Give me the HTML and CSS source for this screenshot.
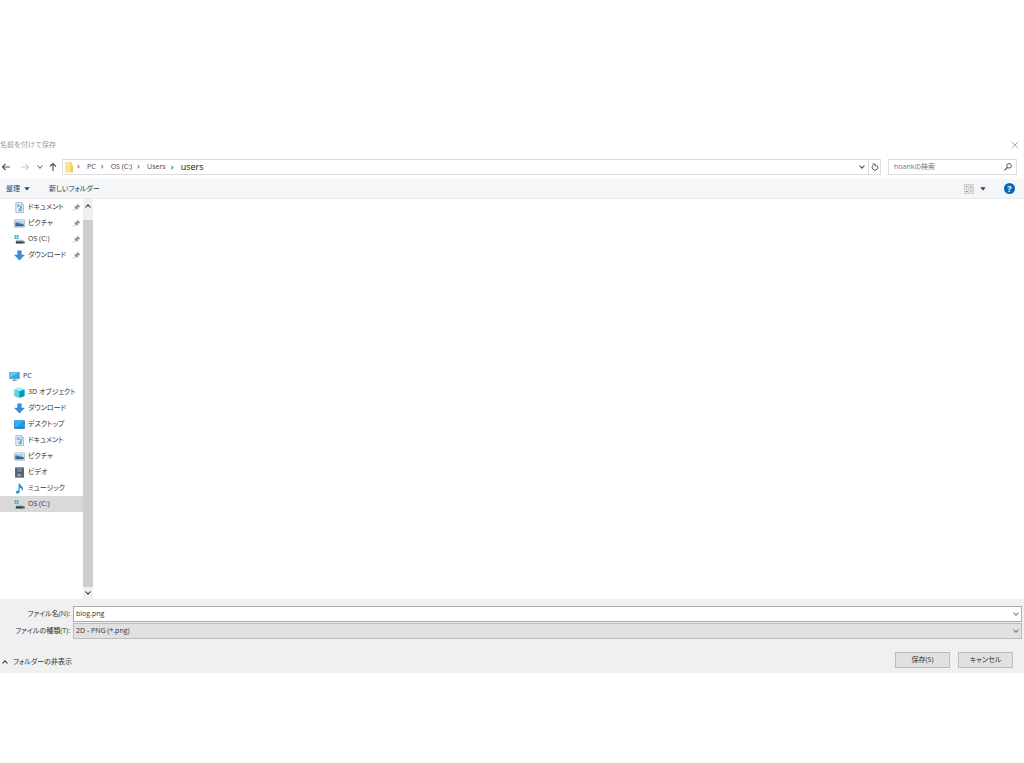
FILE: index.html
```
<!DOCTYPE html>
<html lang="ja">
<head>
    <meta charset="UTF-8">
    <title>名前を付けて保存</title>
    <link rel="stylesheet" href="styles.css">
</head>
<body>
    <!-- shared icons -->
    <svg class="sprite" aria-hidden="true">
        <symbol id="chevron" viewBox="0 0 8 8"><path d="M1.5 2.5 4 5.2 6.5 2.5" fill="none" stroke="currentColor" stroke-width="1.1"/></symbol>
        <symbol id="pin" viewBox="0 0 8 8"><path d="M4.3.7 7.3 3.5 6.6 4 6 3.9 4.8 5.2 4.7 6.5 4.1 6.8 1.2 4 1.6 3.4 2.9 3.3 4.1 2.1 3.9 1.3z" fill="#8d98a1"/><path d="M2.8 5.2.7 7.3" stroke="#8d98a1" stroke-width=".9"/></symbol>
        <symbol id="doc" viewBox="0 0 12 12"><path d="M2 .5h6l2.300 2.300v8.700H2z" fill="#e6f0f6" stroke="#9ba5ad" stroke-width=".8"/><path d="M3.500 2.500h2.500v3H3.500zM6.400 4h2.400v3H6.400zM5 7h3.500v3H5z" fill="#6cb4e0"/><path d="M8 .5v2.300h2.300" fill="none" stroke="#8c969e" stroke-width=".6"/></symbol>
        <symbol id="picture" viewBox="0 0 12 12"><path d="M.5 2h11v8H.5z" fill="#f4f7f9" stroke="#a0abb4" stroke-width=".8"/><path d="M1.500 3h9v6h-9z" fill="#a9d3ef"/><path d="M1.500 5c3-.5 5 1.500 9 1.500V8h-9z" fill="#3f75a3"/><path d="M1.500 7.500h9V9h-9z" fill="#2c5f8c"/></symbol>
        <symbol id="drive" viewBox="0 0 12 12"><path d="M.5 1h2v2h-2zM3 1h2v2H3zM.5 3.500h2v2h-2zM3 3.500h2v2H3z" fill="#29b6e8"/><path d="M2.500 6.300h7l1.500 1.700H2z" fill="#b8bdc0"/><path d="M2 8h9.500v2.400H2z" fill="#333a3d"/><path d="M9.500 8.700h1v.8h-1z" fill="#7ee089"/></symbol>
        <symbol id="down" viewBox="0 0 12 12"><path d="M4 .8h4v4.700h3.300L6 11.200.7 5.500H4z" fill="#368fe0" stroke="#2878c4" stroke-width=".5"/></symbol>
        <symbol id="pc" viewBox="0 0 12 12"><path d="M.5 1.500h11v7H.5z" fill="#34a8ed" stroke="#6e9dbe" stroke-width=".7"/><path d="M1 2h9L1 7z" fill="#68c5f7"/><path d="M5 8.800h2V10h2v.8H3V10h2z" fill="#7e97a7"/></symbol>
        <symbol id="cube" viewBox="0 0 12 12"><path d="M.6 2.600 6 .6l5.400 2v7.100L6 11.700.6 9.700z" fill="#19b3cf"/><path d="M.6 2.600 6 .6l5.400 2-5.400 2z" fill="#a9edf4"/><path d="M.6 2.600 6 4.600v7.100L.6 9.700z" fill="#5bd5e4"/><path d="M6 4.600 11.400 2.600v7.100l-5.400 2z" fill="#079bb9"/></symbol>
        <symbol id="desktop" viewBox="0 0 12 12"><path d="M.5 1.800h11v8.400H.5z" fill="#159cf2" stroke="#1a78bd" stroke-width=".7"/><path d="M1 2.300h8L3 9.500H1z" fill="#2eb0fc"/><path d="M.8 9.200h10.400v1H.8z" fill="#116fae"/></symbol>
        <symbol id="video" viewBox="0 0 12 12"><path d="M1.200.5h9.600v11H1.200z" fill="#42484e"/><path d="M3.300 1.300h5.400v4.300H3.300z" fill="#6485bb"/><path d="M3.300 6.200h5.400v4.500H3.300z" fill="#4773a8"/><path d="m3.300 9 2-2 3.400 3H3.300z" fill="#c69c60"/><path d="M2.300 1v10M9.700 1v10" stroke="#c5cacd" stroke-width=".7" stroke-dasharray="1 1"/></symbol>
        <symbol id="music" viewBox="0 0 12 12"><path d="M5 .5h1.200c.2 2 4 3 3.700 6-.1 1-.6 1.700-1.400 2.200.6-2.200-.5-3-2.300-3.500v4C6.200 11 4.800 11.700 3.500 11.500 2 11.300 1.600 10 2.600 9c.6-.6 1.500-.9 2.400-.6z" fill="#1597e5"/></symbol>
    </svg>

    <form class="dialog">
        <header class="titlebar">
            <h1>名前を付けて保存</h1>
            <button type="button" class="close" aria-label="閉じる"><svg viewBox="0 0 8 8"><path d="m.8.8 6.400 6.400M7.200.8.8 7.200" stroke="#999" stroke-width=".8"/></svg></button>
        </header>

        <div class="navbar">
            <button type="button" class="nav" aria-label="戻る"><svg viewBox="0 0 10 10"><path d="M9 5H1.500M4.500 2l-3 3 3 3" fill="none" stroke="#555" stroke-width="1.100"/></svg></button>
            <button type="button" class="nav forward" aria-label="進む"><svg viewBox="0 0 10 10"><path d="M1 5h7.500M5.500 2l3 3-3 3" fill="none" stroke="#ccc" stroke-width="1.100"/></svg></button>
            <button type="button" class="recent" aria-label="最近の場所"><svg><use href="#chevron"/></svg></button>
            <button type="button" class="nav" aria-label="上へ"><svg viewBox="0 0 10 10"><path d="M5 9V1.500M2 4.500l3-3 3 3" fill="none" stroke="#555" stroke-width="1.200"/></svg></button>
            <div class="address">
                <svg class="folder" viewBox="0 0 10 12"><path d="M1 1h7v3l1 .7v6.500H1z" fill="#f6d672"/><path d="M1 1h5.500v10.200H1z" fill="#ffe18a"/><path d="M7 5h2v6.200H7z" fill="#eec95c"/></svg>
                <nav>
                    <a href="#">PC</a>
                    <a href="#">OS (C:)</a>
                    <a href="#">Users</a>
                    <a href="#" class="current">users</a>
                </nav>
                <button type="button" class="drop" aria-label="履歴"><svg><use href="#chevron"/></svg></button>
                <button type="button" class="refresh" aria-label="更新"><svg viewBox="0 0 10 10"><path d="M3.200 3.200A2.800 2.800 0 1 0 6.800 3.200M2.500 2h2.700v2.600" fill="none" stroke="#555" stroke-width="1"/></svg></button>
            </div>
            <div class="search">
                <input type="text" placeholder="hoankの検索" aria-label="hoankの検索">
                <svg viewBox="0 0 10 10"><circle cx="6" cy="3.800" r="2.300" fill="none" stroke="#555"/><path d="M4.300 5.500 1.500 8.300" stroke="#555" stroke-width="1.100"/></svg>
            </div>
        </div>

        <div class="toolbar">
            <button type="button">整理 <svg class="triangle" viewBox="0 0 6 4"><path d="M.3.3h5.400L3 3.500z"/></svg></button>
            <button type="button" class="new-folder">新しいフォルダー</button>
            <button type="button" class="view" aria-label="表示方法">
                <svg class="tiles" viewBox="0 0 10 10"><path d="M0 0h10v10H0z" fill="#cfd2d3"/><path d="M1 1h3.500v3.500H1zM5.500 1H9v3.500H5.500zM1 5.500h3.500V9H1zM5.500 5.500H9V9H5.500z" fill="#e8e9e5"/><path d="M2 2h1v1H2zM7.500 3h1v1h-1z" fill="#4a91c5"/><path d="M6 2h1v1H6zM1.800 7h2v1h-2z" fill="#d8705c"/><path d="M6.500 6.500h2v1h-2z" fill="#d4b05e"/></svg>
                <svg class="triangle" viewBox="0 0 6 4"><path d="M.3.3h5.400L3 3.500z"/></svg>
            </button>
            <button type="button" class="help" aria-label="ヘルプ">?</button>
        </div>

        <main class="content">
            <aside class="tree">
                <ul class="quick">
                    <li><svg><use href="#doc"/></svg><a href="#">ドキュメント</a><svg class="pin"><use href="#pin"/></svg></li>
                    <li><svg><use href="#picture"/></svg><a href="#">ピクチャ</a><svg class="pin"><use href="#pin"/></svg></li>
                    <li><svg><use href="#drive"/></svg><a href="#">OS (C:)</a><svg class="pin"><use href="#pin"/></svg></li>
                    <li><svg><use href="#down"/></svg><a href="#">ダウンロード</a><svg class="pin"><use href="#pin"/></svg></li>
                </ul>
                <ul>
                    <li class="root"><svg><use href="#pc"/></svg><a href="#">PC</a></li>
                    <li><svg><use href="#cube"/></svg><a href="#">3D オブジェクト</a></li>
                    <li><svg><use href="#down"/></svg><a href="#">ダウンロード</a></li>
                    <li><svg><use href="#desktop"/></svg><a href="#">デスクトップ</a></li>
                    <li><svg><use href="#doc"/></svg><a href="#">ドキュメント</a></li>
                    <li><svg><use href="#picture"/></svg><a href="#">ピクチャ</a></li>
                    <li><svg><use href="#video"/></svg><a href="#">ビデオ</a></li>
                    <li><svg><use href="#music"/></svg><a href="#">ミュージック</a></li>
                    <li class="selected"><svg><use href="#drive"/></svg><a href="#">OS (C:)</a></li>
                </ul>
            </aside>
            <div class="scrollbar">
                <button type="button" class="up" aria-label="上へスクロール"><svg><use href="#chevron"/></svg></button>
                <div class="thumb"></div>
                <button type="button" aria-label="下へスクロール"><svg><use href="#chevron"/></svg></button>
            </div>
            <section class="files"></section>
        </main>

        <footer class="footer">
            <div class="field">
                <label for="fileName">ファイル名(N):</label>
                <div class="combo">
                    <input type="text" id="fileName" value="blog.png">
                    <svg><use href="#chevron"/></svg>
                </div>
            </div>
            <div class="field">
                <label for="fileType">ファイルの種類(T):</label>
                <div class="combo type">
                    <select id="fileType"><option>2D - PNG (*.png)</option></select>
                    <svg><use href="#chevron"/></svg>
                </div>
            </div>
            <div class="actions">
                <button type="button" class="toggle"><svg><use href="#chevron"/></svg>フォルダーの非表示</button>
                <button type="submit" class="btn">保存(S)</button>
                <button type="button" class="btn">キャンセル</button>
            </div>
        </footer>
    </form>
</body>
</html>
```
FILE: styles.css
```
* {
    box-sizing: border-box;
}
body {
    margin: 0;
    padding: 136px 0 88px;
    background: #fff;
    color: #333;
    font-family: "Open Sans", "Noto Sans CJK JP", sans-serif;
    font-size: 7px;
    font-feature-settings: "palt";
    line-height: 12px;
}
button, input, select {
    margin: 0;
    padding: 0;
    border: none;
    background: none;
    color: inherit;
    font: inherit;
    font-feature-settings: inherit;
}
a {
    color: inherit;
    text-decoration: none;
}
svg {
    display: block;
    flex: none;
    width: 8px;
    height: 8px;
}
.sprite {
    position: absolute;
    width: 0;
    height: 0;
}

/* title and address */
.titlebar {
    display: flex;
    align-items: center;
    justify-content: space-between;
    height: 18px;
    padding-right: 5px;
}
.titlebar h1 {
    margin: 0;
    color: #999;
    font-size: 7px;
    font-weight: normal;
    font-feature-settings: normal;
}
.navbar {
    display: flex;
    align-items: center;
    height: 25px;
    padding: 0 7px 0 1px;
}
.nav svg {
    width: 10px;
    height: 10px;
}
.forward {
    margin-left: 9px;
}
.recent {
    margin: 0 4px 0 6px;
    color: #777;
}
.address, .search {
    display: flex;
    align-items: center;
    height: 16px;
    border: 1px solid #ddd;
}
.address {
    flex: 1;
    margin-left: 4px;
    color: #444;
}
.folder {
    width: 10px;
    height: 12px;
    margin: 0 3px 0 1px;
}
.address nav {
    display: flex;
    flex: 1;
    align-items: center;
}
.address nav a::before {
    content: "›";
    display: inline-block;
    width: 10px;
    font-size: 9px;
}
.address nav a {
    margin-right: 5px;
}
.address nav .current {
    color: #111;
    font-size: 9px;
}
.drop, .refresh {
    display: flex;
    align-items: center;
    justify-content: center;
    width: 12px;
    height: 14px;
}
.refresh {
    border-left: 1px solid #ddd;
}
.refresh svg, .search svg {
    width: 10px;
    height: 10px;
}
.search {
    width: 129px;
    margin-left: 7px;
    padding: 0 3px 0 5px;
}
.search input {
    flex: 1;
    min-width: 0;
}
.search input::placeholder {
    color: #777;
    opacity: 1;
}

/* toolbar */
.toolbar {
    display: flex;
    align-items: center;
    height: 20px;
    padding: 0 9px 0 6px;
    border-bottom: 1px solid #e6eaed;
    background: #f4f6f8;
    color: #26405f;
}
.toolbar button {
    display: flex;
    align-items: center;
    gap: 4px;
}
.triangle {
    width: 6px;
    height: 4px;
    fill: #26405f;
}
.toolbar .new-folder {
    margin-left: 19px;
}
.toolbar .view {
    gap: 6px;
    margin: 0 18px 0 auto;
}
.tiles {
    width: 10px;
    height: 10px;
}
.toolbar .help {
    justify-content: center;
    width: 11px;
    height: 11px;
    border-radius: 50%;
    background: #0868b8;
    color: #fff;
    font-size: 9px;
    font-weight: bold;
}

/* folder tree */
.content {
    display: flex;
    height: 400px;
}
.tree {
    width: 83px;
}
.tree ul {
    margin: 0;
    padding: 0;
    list-style: none;
}
.tree .quick {
    margin-bottom: 105px;
}
.tree li {
    display: flex;
    align-items: center;
    gap: 3px;
    height: 16px;
    padding: 0 2px 0 14px;
}
.tree li svg {
    width: 11px;
    height: 11px;
}
.tree li .pin {
    width: 8px;
    height: 8px;
    margin-left: auto;
}
.tree .root {
    padding-left: 9px;
}
.tree .selected {
    background: #d9d9d9;
}
.scrollbar {
    display: flex;
    flex-direction: column;
    width: 10px;
    background: #f0f0f0;
}
.scrollbar button {
    height: 12px;
    padding: 0 1px;
}
.scrollbar .up {
    height: 21px;
    padding-bottom: 8px;
}
.up svg, .toggle svg {
    transform: rotate(180deg);
}
.thumb {
    flex: 1;
    background: #cdcdcd;
}
.files {
    flex: 1;
}

/* file name and buttons */
.footer {
    padding: 7px 2px 5px 0;
    background: #f0f0f0;
}
.field {
    display: flex;
    align-items: center;
    margin-bottom: 1px;
}
.field label {
    width: 73px;
    padding-right: 3px;
    text-align: right;
    white-space: nowrap;
}
.combo {
    display: flex;
    flex: 1;
    align-items: center;
    height: 16px;
    padding: 0 1px 0 2px;
    border: 1px solid #aaa;
    background: #fff;
}
.combo input, .combo select {
    flex: 1;
    min-width: 0;
    appearance: none;
}
.combo svg {
    color: #777;
}
.combo.type {
    border-color: #bbb;
    background: #e1e1e1;
}
.actions {
    display: flex;
    align-items: center;
    gap: 8px;
    margin-top: 13px;
    padding-right: 9px;
}
.toggle {
    display: flex;
    align-items: center;
    gap: 4px;
    margin-right: auto;
    padding: 3px 0 0 1px;
}
.btn {
    width: 55px;
    height: 16px;
    border: 1px solid #bbb;
    background: #e1e1e1;
}
```
